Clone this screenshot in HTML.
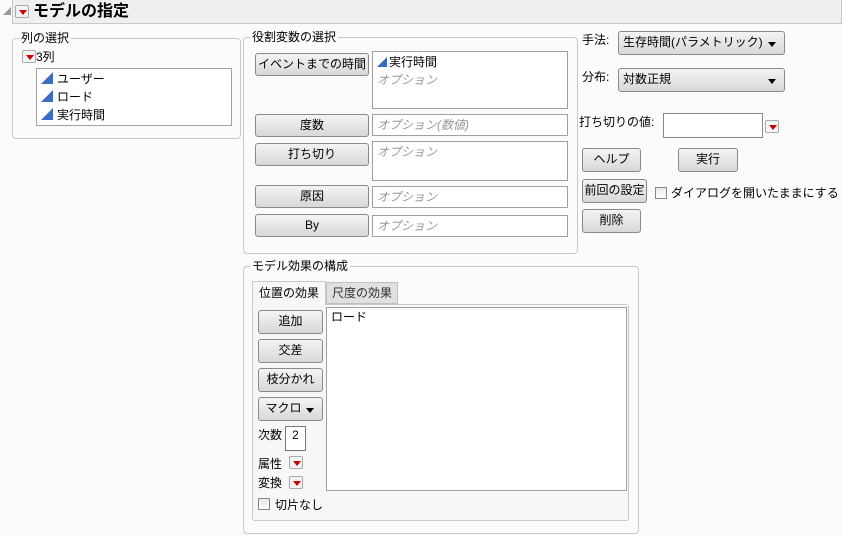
<!DOCTYPE html>
<html><head><meta charset="utf-8"><style>
*{box-sizing:border-box;margin:0;padding:0}
body{width:842px;height:536px;background:#fbfbfb;font-family:"Liberation Sans","Noto Sans CJK JP",sans-serif;font-size:12px;color:#000;position:relative;overflow:hidden}
.a{position:absolute}
.grp{position:absolute;border:1px solid #c8c8c8;border-radius:4px}
.lg{position:absolute;top:-9px;left:6px;background:#fbfbfb;padding:0 2px;font-size:12px;line-height:16px}
.btn{position:absolute;border:1px solid #8a8a8a;border-radius:3px;background:linear-gradient(#f4f4f4,#e6e6e6 50%,#d8d8d8);text-align:center;font-size:12px;line-height:21px}
.box{position:absolute;background:#fff;border:1px solid #a0a0a0}
.opt{color:#999;font-style:italic;font-size:12px}
.rb{position:absolute;width:14px;height:13px;border:1px solid #aaa;border-radius:2px;background:#f4f4f4}
.rb:after{content:"";position:absolute;left:3px;top:4px;border-left:4px solid transparent;border-right:4px solid transparent;border-top:5px solid #c00}
.tri{display:inline-block;width:0;height:0;border-left:12px solid transparent;border-bottom:12px solid #3b6cc4;vertical-align:-1px;margin-right:4px}
.dd:after{content:"";position:absolute;right:8px;top:10px;border-left:4px solid transparent;border-right:4px solid transparent;border-top:5px solid #000}
.cb{position:absolute;width:12px;height:12px;border:1px solid #888;background:linear-gradient(#e8e8e8,#fff)}
</style></head><body>
<div class="a" style="left:3px;top:7px;width:0;height:0;border-left:8px solid transparent;border-bottom:8px solid #999"></div>
<div class="a" style="left:12px;top:0;width:830px;height:24px;background:#efefef;border:1px solid #c8c8c8;border-top:none"></div>
<div class="rb" style="left:15px;top:5px"></div>
<div class="a" style="left:33px;top:2px;font-size:16px;font-weight:bold;line-height:20px">モデルの指定</div>

<div class="grp" style="left:12px;top:38px;width:229px;height:101px"><span class="lg">列の選択</span></div>
<div class="rb" style="left:22px;top:50px"></div>
<div class="a" style="left:36px;top:49px;line-height:16px">3列</div>
<div class="box" style="left:36px;top:68px;width:196px;height:58px;line-height:18px;padding:1px 0 0 4px">
<div><span class="tri"></span>ユーザー</div><div><span class="tri"></span>ロード</div><div><span class="tri"></span>実行時間</div></div>

<div class="grp" style="left:243px;top:37px;width:335px;height:217px"><span class="lg">役割変数の選択</span></div>
<div class="btn" style="left:255px;top:53px;width:114px;height:23px">イベントまでの時間</div>
<div class="btn" style="left:255px;top:114px;width:114px;height:23px">度数</div>
<div class="btn" style="left:255px;top:143px;width:114px;height:23px">打ち切り</div>
<div class="btn" style="left:255px;top:185px;width:114px;height:23px">原因</div>
<div class="btn" style="left:255px;top:214px;width:114px;height:23px">By</div>
<div class="box" style="left:372px;top:51px;width:196px;height:58px;padding:1px 4px;line-height:18px"><div><span class="tri" style="border-left-width:10px;border-bottom-width:10px;margin-right:2px"></span>実行時間</div><div class="opt">オプション</div></div>
<div class="box" style="left:372px;top:114px;width:196px;height:22px;padding:0 4px;line-height:20px"><span class="opt">オプション(数値)</span></div>
<div class="box" style="left:372px;top:141px;width:196px;height:40px;padding:0 4px;line-height:20px"><span class="opt">オプション</span></div>
<div class="box" style="left:372px;top:186px;width:196px;height:22px;padding:0 4px;line-height:20px"><span class="opt">オプション</span></div>
<div class="box" style="left:372px;top:215px;width:196px;height:22px;padding:0 4px;line-height:20px"><span class="opt">オプション</span></div>

<div class="a" style="left:582px;top:31px">手法:</div>
<div class="btn dd" style="left:618px;top:31px;width:167px;height:24px;text-align:left;padding-left:4px">生存時間(パラメトリック)</div>
<div class="a" style="left:582px;top:68px">分布:</div>
<div class="btn dd" style="left:618px;top:68px;width:167px;height:24px;text-align:left;padding-left:4px">対数正規</div>
<div class="a" style="left:579px;top:113px">打ち切りの値:</div>
<div class="box" style="left:663px;top:113px;width:100px;height:25px;border-color:#888"></div>
<div class="rb" style="left:765px;top:120px"></div>
<div class="btn" style="left:582px;top:148px;width:59px;height:24px">ヘルプ</div>
<div class="btn" style="left:678px;top:148px;width:60px;height:24px">実行</div>
<div class="btn" style="left:582px;top:179px;width:65px;height:24px">前回の設定</div>
<div class="cb" style="left:655px;top:187px"></div>
<div class="a" style="left:671px;top:184px">ダイアログを開いたままにする</div>
<div class="btn" style="left:582px;top:209px;width:59px;height:24px">削除</div>

<div class="grp" style="left:243px;top:266px;width:396px;height:268px"><span class="lg">モデル効果の構成</span></div>
<div class="a" style="left:252px;top:304px;width:377px;height:217px;border:1px solid #c8c8c8;border-radius:3px;background:#f7f7f7"></div>
<div class="a" style="left:326px;top:282px;width:72px;height:22px;background:#e0e0e0;border:1px solid #c0c0c0;line-height:20px;text-align:center;color:#333">尺度の効果</div>
<div class="a" style="left:252px;top:281px;width:74px;height:24px;background:#f7f7f7;border:1px solid #c8c8c8;border-bottom:none;line-height:22px;text-align:center">位置の効果</div>
<div class="btn" style="left:258px;top:310px;width:65px;height:24px">追加</div>
<div class="btn" style="left:258px;top:339px;width:65px;height:24px">交差</div>
<div class="btn" style="left:258px;top:368px;width:65px;height:24px">枝分かれ</div>
<div class="btn dd" style="left:258px;top:397px;width:65px;height:24px;padding-right:14px">マクロ</div>
<div class="a" style="left:258px;top:426px">次数</div>
<div class="box" style="left:285px;top:426px;width:21px;height:25px;border-color:#777;text-align:center;line-height:16px">2</div>
<div class="a" style="left:258px;top:455px">属性</div><div class="rb" style="left:289px;top:456px"></div>
<div class="a" style="left:258px;top:474px">変換</div><div class="rb" style="left:289px;top:476px"></div>
<div class="cb" style="left:258px;top:498px"></div>
<div class="a" style="left:275px;top:496px">切片なし</div>
<div class="box" style="left:326px;top:307px;width:301px;height:184px;padding:0 4px;line-height:18px">ロード</div>
</body></html>
